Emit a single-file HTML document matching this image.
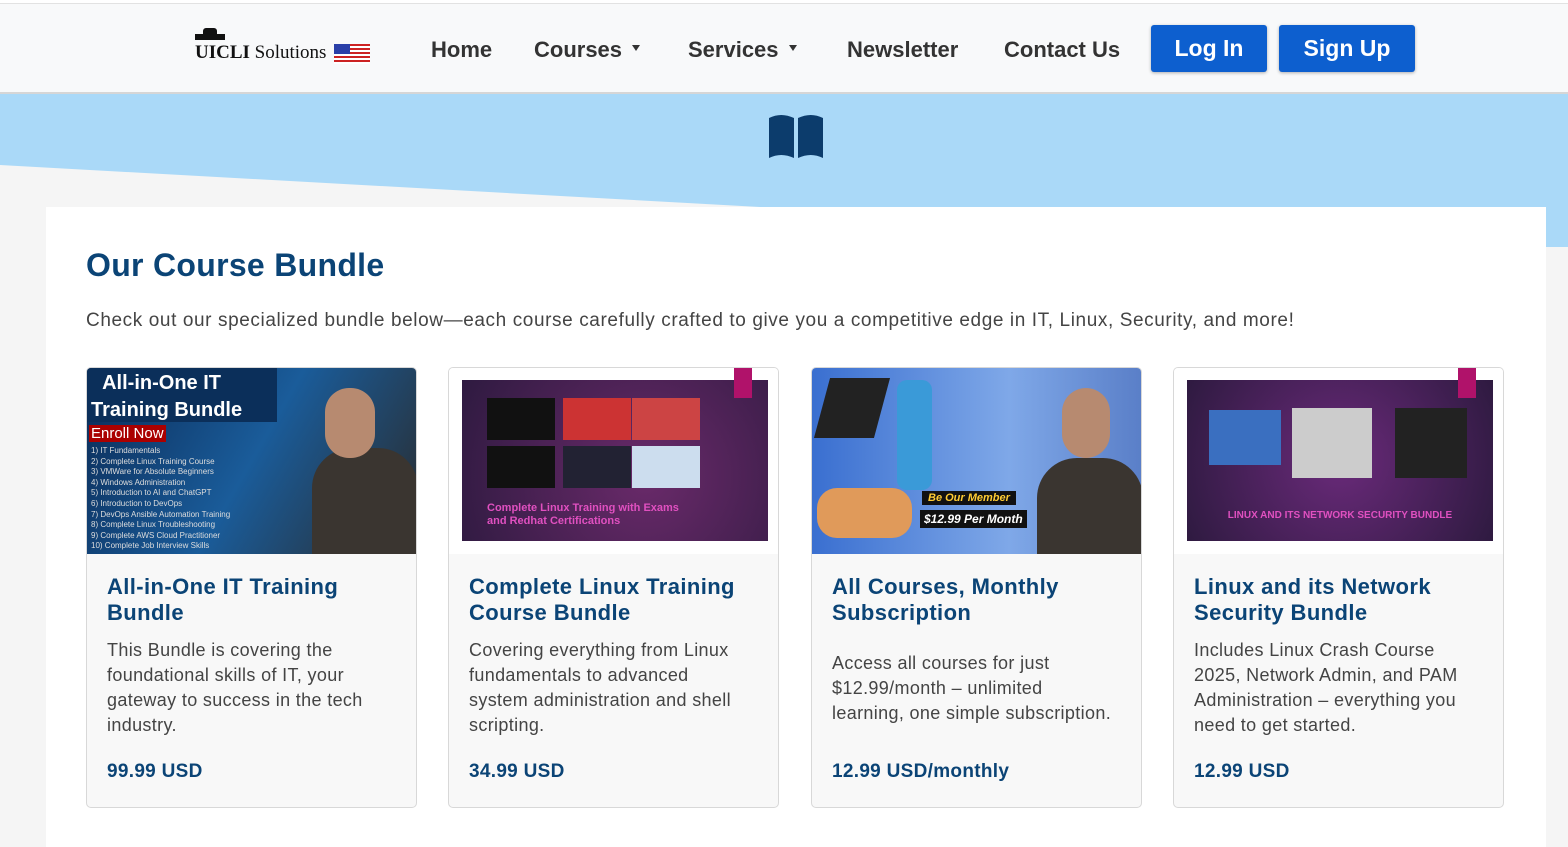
<!DOCTYPE html>
<html><head><meta charset="utf-8"><style>
*{box-sizing:border-box;margin:0;padding:0}
body{width:1568px;height:837px;overflow:hidden;background:#f5f5f5;font-family:"Liberation Sans",Arial,sans-serif;position:relative}
.top{position:absolute;left:0;top:0;width:1568px;height:4px;background:#fff;border-bottom:1px solid #e2e2e2}
nav{position:absolute;left:0;top:4px;width:1568px;height:90px;background:#f8f9fa;border-bottom:2px solid #d6d6d6;z-index:3}
.nl{position:absolute;top:33px;font-size:22px;font-weight:bold;color:#333}
.car{display:inline-block;margin-left:10px;border-left:4px solid transparent;border-right:4px solid transparent;border-top:6px solid #333;vertical-align:middle;position:relative;top:-3px}
.btn{position:absolute;top:21px;height:47px;background:#0d5fcf;color:#fff;font-weight:bold;font-size:23px;border-radius:3px;text-align:center;line-height:47px;box-shadow:0 1px 3px rgba(0,0,0,.3)}
.blue{position:absolute;left:0;top:94px;width:1568px;height:113px;background:#aad9f8}
.panel{position:absolute;left:46px;top:207px;width:1500px;height:640px;background:#fff}
h1{position:absolute;left:86px;top:247px;font-size:32px;color:#0b4476;font-weight:bold;letter-spacing:0.3px}
.sub{position:absolute;left:86px;top:310px;font-size:19px;color:#444;letter-spacing:0.6px}
.card{position:absolute;top:367px;width:331px;height:441px;background:#f8f8f8;border:1px solid #d8d8d8;border-radius:5px;overflow:hidden}
.img{position:absolute;left:0;top:0;width:100%;height:186px;background:#fff}
.ct{position:absolute;left:20px;top:206px;font-size:22px;font-weight:bold;color:#0b4476;line-height:26px;letter-spacing:0.4px}
.cd{position:absolute;left:20px;top:270px;font-size:18px;color:#444;line-height:25px;width:275px;letter-spacing:0.35px}
.pr{position:absolute;left:20px;top:393px;font-size:19px;font-weight:bold;color:#0b4476;letter-spacing:0.3px}
</style></head><body>
<div class="top"></div>
<nav>
 <div style="position:absolute;left:195px;top:30px;width:30px;height:6px;background:#111"></div>
 <div style="position:absolute;left:203px;top:24px;width:14px;height:7px;background:#111;border-radius:3px 3px 0 0"></div>
 <div style="position:absolute;left:195px;top:38px;font-family:'Liberation Serif',serif;font-size:19px;color:#111"><b>UICLI</b> Solutions</div>
 <div style="position:absolute;left:334px;top:40px;width:36px;height:20px;background:repeating-linear-gradient(#c22 0 2px,#fff 2px 4px)"><div style="width:16px;height:10px;background:#2a3fa8"></div></div>
 <div class="nl" style="left:431px">Home</div>
 <div class="nl" style="left:534px">Courses<span class="car"></span></div>
 <div class="nl" style="left:688px">Services<span class="car"></span></div>
 <div class="nl" style="left:847px">Newsletter</div>
 <div class="nl" style="left:1004px">Contact Us</div>
 <div class="btn" style="left:1151px;width:116px">Log In</div>
 <div class="btn" style="left:1279px;width:136px">Sign Up</div>
</nav>
<div class="blue"></div>
<div style="position:absolute;left:1546px;top:207px;width:22px;height:40px;background:#aad9f8"></div>
<svg style="position:absolute;left:0;top:160px" width="1568" height="47"><polygon points="0,5 760,47 0,47" fill="#f5f5f5"/></svg>
<svg style="position:absolute;left:767px;top:114px" width="58" height="44"><path d="M2 4Q14 -2 27 4V44Q14 38 2 44Z M31 4Q44 -2 56 4V44Q44 38 31 44Z" fill="#0c3c6c"/></svg>
<div class="panel"></div>
<h1>Our Course Bundle</h1>
<div class="sub">Check out our specialized bundle below—each course carefully crafted to give you a competitive edge in IT, Linux, Security, and more!</div>

<div class="card" style="left:86px"><div class="img" style="background:linear-gradient(120deg,#0a2a55,#1a5c9a 50%,#2a2a2a)">
 <div style="position:absolute;left:0;top:0;width:190px;height:54px;background:#0b2f5a"></div>
 <div style="position:absolute;left:4px;top:2px;color:#fff;font-size:20px;font-weight:bold;line-height:27px">&nbsp;&nbsp;All-in-One IT<br>Training Bundle</div>
 <div style="position:absolute;left:2px;top:57px;background:#a00;color:#fff;font-size:15px;padding:0 2px">Enroll Now</div>
 <div style="position:absolute;left:4px;top:78px;color:#ddd;font-size:8px;line-height:10.6px">1) IT Fundamentals<br>2) Complete Linux Training Course<br>3) VMWare for Absolute Beginners<br>4) Windows Administration<br>5) Introduction to AI and ChatGPT<br>6) Introduction to DevOps<br>7) DevOps Ansible Automation Training<br>8) Complete Linux Troubleshooting<br>9) Complete AWS Cloud Practitioner<br>10) Complete Job Interview Skills</div>
 <div style="position:absolute;left:225px;top:80px;width:106px;height:106px;background:#3a3530;border-radius:40px 40px 0 0"></div>
 <div style="position:absolute;left:238px;top:20px;width:50px;height:70px;background:#b78a70;border-radius:24px"></div>
</div>
<div class="ct">All-in-One IT Training<br>Bundle</div><div class="cd">This Bundle is covering the foundational skills of IT, your gateway to success in the tech industry.</div><div class="pr">99.99 USD</div></div>

<div class="card" style="left:448px"><div class="img"><div style="position:absolute;left:13px;top:12px;width:306px;height:161px;background:radial-gradient(circle at 60% 60%,#6a2a6a,#2e1a40)">
 <div style="position:absolute;left:25px;top:18px;width:68px;height:42px;background:#111"></div><div style="position:absolute;left:101px;top:18px;width:68px;height:42px;background:#c33"></div><div style="position:absolute;left:170px;top:18px;width:68px;height:42px;background:#c44"></div>
 <div style="position:absolute;left:25px;top:66px;width:68px;height:42px;background:#111"></div><div style="position:absolute;left:101px;top:66px;width:68px;height:42px;background:#223"></div><div style="position:absolute;left:170px;top:66px;width:68px;height:42px;background:#cde"></div>
 <div style="position:absolute;left:25px;top:122px;color:#e050c0;font-size:11px;font-weight:bold;line-height:13px">Complete Linux Training with Exams<br>and Redhat Certifications</div>
</div><div style="position:absolute;left:285px;top:0;width:18px;height:30px;background:#b0126a"></div></div>
<div class="ct">Complete Linux Training<br>Course Bundle</div><div class="cd">Covering everything from Linux fundamentals to advanced system administration and shell scripting.</div><div class="pr">34.99 USD</div></div>

<div class="card" style="left:811px"><div class="img" style="background:linear-gradient(90deg,#3a6fd0,#7fa8e8 60%,#5a7fc8)">
 <div style="position:absolute;left:10px;top:10px;width:60px;height:60px;background:#222;transform:skew(-15deg)"></div>
 <div style="position:absolute;left:85px;top:12px;width:35px;height:110px;background:#3a9ad8;border-radius:10px"></div>
 <div style="position:absolute;left:5px;top:120px;width:95px;height:50px;background:#e09a5a;border-radius:20px"></div>
 <div style="position:absolute;left:110px;top:123px;background:#111;color:#fc3;font-size:11px;font-weight:bold;font-style:italic;padding:1px 6px">Be Our Member</div>
 <div style="position:absolute;left:108px;top:142px;background:#111;color:#fff;font-size:12px;font-weight:bold;font-style:italic;padding:2px 4px">$12.99 Per Month</div>
 <div style="position:absolute;left:225px;top:90px;width:106px;height:96px;background:#3a3530;border-radius:40px 40px 0 0"></div>
 <div style="position:absolute;left:250px;top:20px;width:48px;height:70px;background:#b78a70;border-radius:24px"></div>
</div>
<div class="ct">All Courses, Monthly<br>Subscription</div><div class="cd" style="top:283px;width:285px">Access all courses for just $12.99/month – unlimited learning, one simple subscription.</div><div class="pr">12.99 USD/monthly</div></div>

<div class="card" style="left:1173px"><div class="img"><div style="position:absolute;left:13px;top:12px;width:306px;height:161px;background:radial-gradient(circle at 50% 50%,#6a2a7a,#2e1a40)">
 <div style="position:absolute;left:22px;top:30px;width:72px;height:55px;background:#3a6fc0"></div><div style="position:absolute;left:105px;top:28px;width:80px;height:70px;background:#ccc"></div><div style="position:absolute;left:208px;top:28px;width:72px;height:70px;background:#222"></div>
 <div style="position:absolute;left:0;width:306px;top:130px;text-align:center;color:#e050c0;font-size:10px;font-weight:bold">LINUX AND ITS NETWORK SECURITY BUNDLE</div>
</div><div style="position:absolute;left:284px;top:0;width:18px;height:30px;background:#b0126a"></div></div>
<div class="ct">Linux and its Network<br>Security Bundle</div><div class="cd">Includes Linux Crash Course 2025, Network Admin, and PAM Administration – everything you need to get started.</div><div class="pr">12.99 USD</div></div>
</body></html>
